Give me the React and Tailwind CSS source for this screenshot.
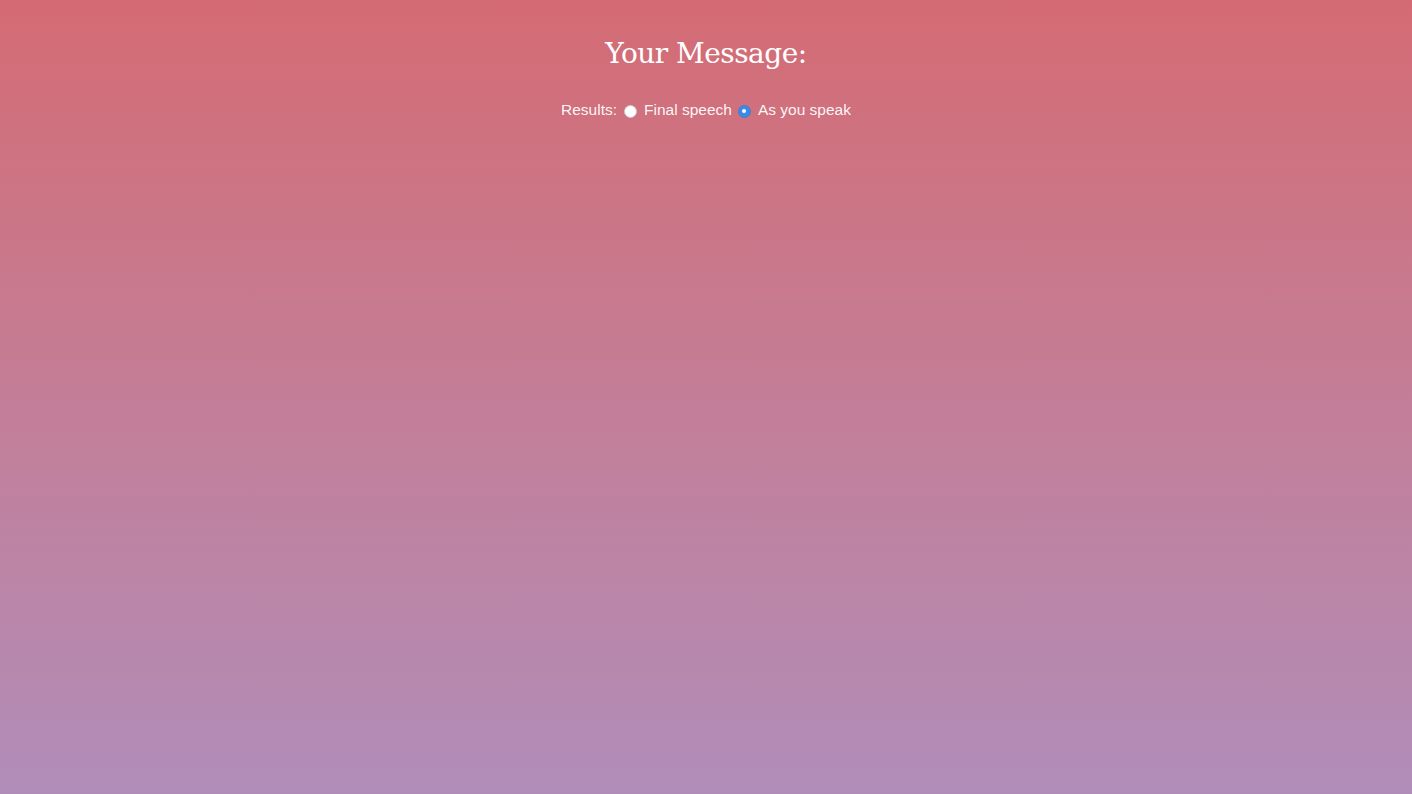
export default function App() {
  return (
    <div className="min-h-screen w-full bg-gradient-to-b from-[#d46b73] to-[#b08db9] text-white flex flex-col items-center">
      <h1 className="mt-[34px] text-[28px] leading-[40px] font-['DejaVu_Serif','Liberation_Serif',serif] tracking-[-0.5px]">
        Your Message:
      </h1>
      <div className="mt-[26px] flex items-center text-[15.5px] leading-[20px] font-['Liberation_Sans',Arial,sans-serif] text-white/95">
        <span>Results:</span>
        <span className="ml-[7px] w-[13px] h-[13px] rounded-full bg-white border border-[#c9c9c9] mt-[2px]" />
        <span className="ml-[7px]">Final speech</span>
        <span className="ml-[6px] w-[13px] h-[13px] rounded-full bg-[#3d8ae6] border border-[#3a7fd6] mt-[2px] flex items-center justify-center">
          <span className="w-[4px] h-[4px] rounded-full bg-white" />
        </span>
        <span className="ml-[7px]">As you speak</span>
      </div>
    </div>
  );
}
